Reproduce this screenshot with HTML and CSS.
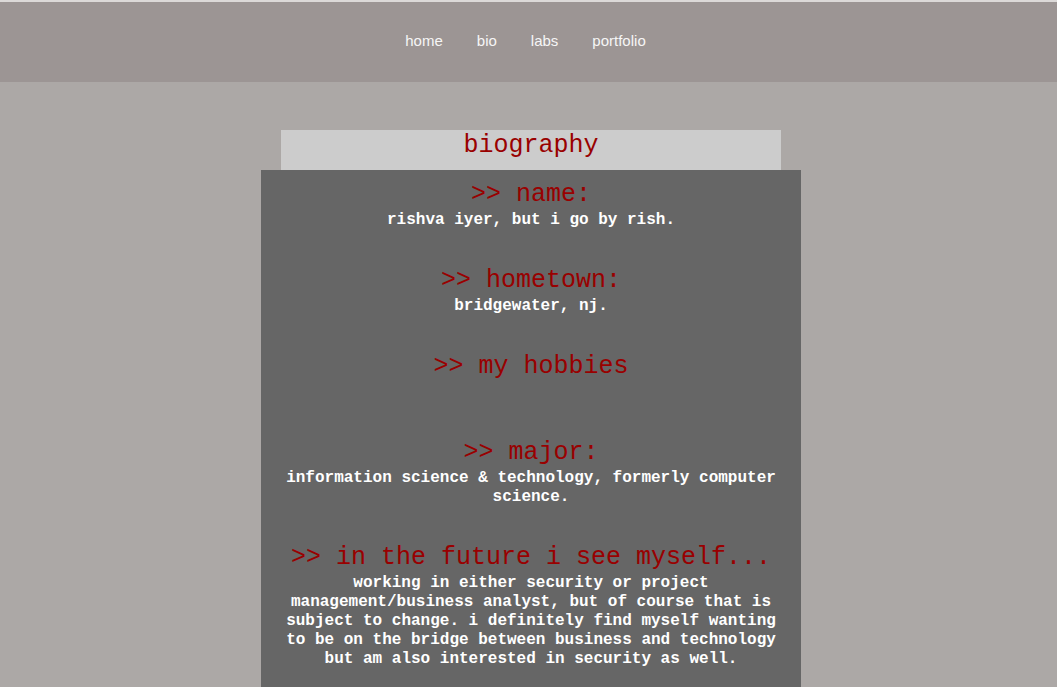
FILE: index.html
```html
<!DOCTYPE html>
<html lang="en">
<head>
<meta charset="utf-8">
<title>biography</title>
<link rel="stylesheet" href="styles.css">
</head>
<body>
<header class="site-header">
  <nav class="nav">
    <a href="#">home</a>
    <a href="#">bio</a>
    <a href="#">labs</a>
    <a href="#">portfolio</a>
  </nav>
</header>
<main class="page">
  <div class="title-box"><h1 class="title">biography</h1></div>
  <section class="content">
    <div class="item">
      <h2 class="item-head">&gt;&gt; name:</h2>
      <p class="item-text">rishva iyer, but i go by rish.</p>
    </div>
    <div class="item">
      <h2 class="item-head">&gt;&gt; hometown:</h2>
      <p class="item-text">bridgewater, nj.</p>
    </div>
    <div class="item">
      <h2 class="item-head">&gt;&gt; my hobbies</h2>
      <ul class="item-list"></ul>
    </div>
    <div class="item">
      <h2 class="item-head">&gt;&gt; major:</h2>
      <p class="item-text">information science &amp; technology, formerly computer science.</p>
    </div>
    <div class="item">
      <h2 class="item-head">&gt;&gt; in the future i see myself...</h2>
      <p class="item-text">working in either security or project management/business analyst, but of course that is subject to change. i definitely find myself wanting to be on the bridge between business and technology but am also interested in security as well.</p>
    </div>
  </section>
</main>
</body>
</html>
```

FILE: styles.css
```css
html, body {
  margin: 0;
  padding: 0;
}
body {
  background: #aca8a6;
  font-family: "Liberation Mono", "Courier New", monospace;
  min-height: 687px;
}
.site-header {
  background: #9c9594;
  border-top: 2px solid #dcd9d8;
  height: 80px;
  display: flex;
  align-items: center;
  justify-content: center;
}
.nav {
  display: flex;
  gap: 34px;
  padding-right: 6px;
  margin-top: -4px;
}
.nav a {
  font-family: "Liberation Sans", Arial, Helvetica, sans-serif;
  font-size: 15px;
  color: #f6f6f6;
  text-decoration: none;
}
.page {
  padding-top: 48px;
  padding-left: 5px;
  display: flex;
  flex-direction: column;
  align-items: center;
}
.title-box {
  width: 500px;
  height: 40px;
  padding-top: 2px;
  background: #cccccc;
  box-sizing: border-box;
}
.title {
  margin: 0;
  font-weight: normal;
  font-size: 25px;
  line-height: 28px;
  color: #990000;
  text-align: center;
}
.content {
  width: 540px;
  background: #666666;
  box-sizing: border-box;
  padding: 11px 24px 30px;
  display: flex;
  flex-direction: column;
  gap: 37px;
  text-align: center;
}
.item-head {
  margin: 0 0 3px;
  font-weight: normal;
  font-size: 25px;
  line-height: 27px;
  color: #990000;
}
.item-text {
  margin: 0;
  font-weight: bold;
  font-size: 16px;
  line-height: 19px;
  color: #ffffff;
}
.item-list {
  margin: 0;
  padding: 0;
  height: 19px;
}
```
